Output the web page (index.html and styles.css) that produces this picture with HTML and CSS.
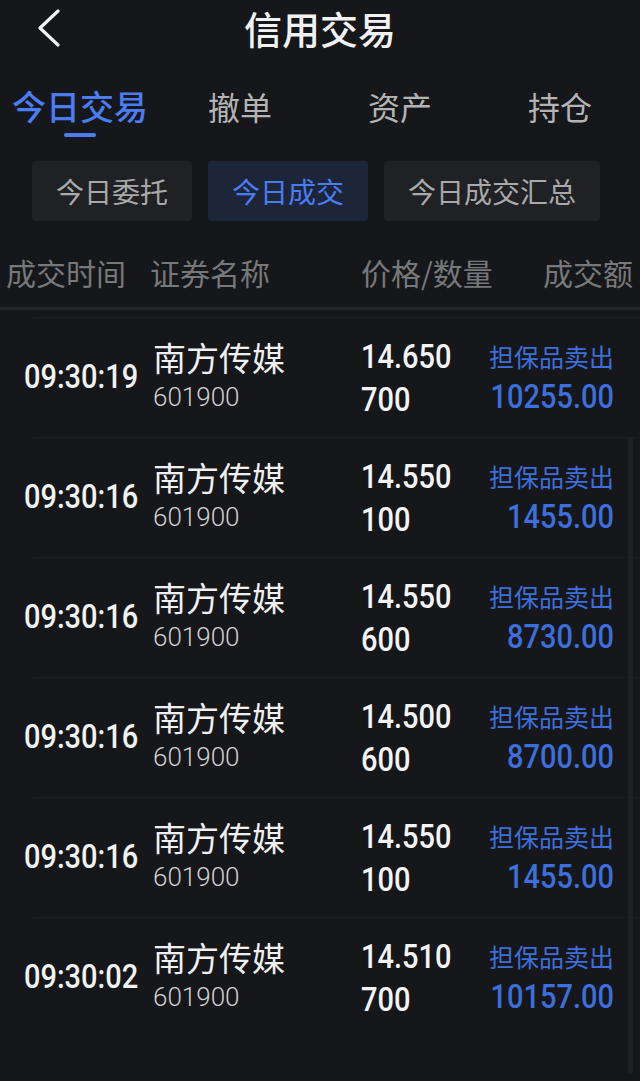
FILE: index.html
```html
<!DOCTYPE html>
<html lang="zh-CN">
<head>
    <meta charset="UTF-8">
    <meta name="viewport" content="width=device-width, initial-scale=1.0">
    <title>信用交易</title>
    <link rel="stylesheet" href="styles.css">
</head>
<body>

<div class="app">
    <!-- top bar -->
    <div class="nav">
        <div class="back">
            <svg width="24" height="38" viewBox="0 0 24 38">
                <polyline points="21,2 3,19 21,36" fill="none" stroke="#f2f2f2" stroke-width="3.2" stroke-linecap="round" stroke-linejoin="round"/>
            </svg>
        </div>
        <div class="title">信用交易</div>
        <div></div>
    </div>

    <!-- main tabs -->
    <div class="tabs">
        <div class="tab active">今日交易<span class="indicator"></span></div>
        <div class="tab">撤单</div>
        <div class="tab">资产</div>
        <div class="tab">持仓</div>
    </div>

    <!-- sub tabs -->
    <div class="sub-tabs">
        <div class="sub-tab">今日委托</div>
        <div class="sub-tab active">今日成交</div>
        <div class="sub-tab">今日成交汇总</div>
    </div>

    <div class="list-head">
        <span>成交时间</span>
        <span>证券名称</span>
        <span>价格/数量</span>
        <span class="right">成交额</span>
    </div>

    <div class="list">
        <div class="scrollbar"></div>

        <div class="row">
            <div class="time"><span class="num">09:30:19</span></div>
            <div class="stock">
                <div class="name">南方传媒</div>
                <div class="code">601900</div>
            </div>
            <div class="price">
                <div><span class="num">14.650</span></div>
                <div><span class="num">700</span></div>
            </div>
            <div class="amount">
                <div class="type">担保品卖出</div>
                <div><span class="num">10255.00</span></div>
            </div>
        </div>

        <div class="row">
            <div class="time"><span class="num">09:30:16</span></div>
            <div class="stock">
                <div class="name">南方传媒</div>
                <div class="code">601900</div>
            </div>
            <div class="price">
                <div><span class="num">14.550</span></div>
                <div><span class="num">100</span></div>
            </div>
            <div class="amount">
                <div class="type">担保品卖出</div>
                <div><span class="num">1455.00</span></div>
            </div>
        </div>

        <div class="row">
            <div class="time"><span class="num">09:30:16</span></div>
            <div class="stock">
                <div class="name">南方传媒</div>
                <div class="code">601900</div>
            </div>
            <div class="price">
                <div><span class="num">14.550</span></div>
                <div><span class="num">600</span></div>
            </div>
            <div class="amount">
                <div class="type">担保品卖出</div>
                <div><span class="num">8730.00</span></div>
            </div>
        </div>

        <div class="row">
            <div class="time"><span class="num">09:30:16</span></div>
            <div class="stock">
                <div class="name">南方传媒</div>
                <div class="code">601900</div>
            </div>
            <div class="price">
                <div><span class="num">14.500</span></div>
                <div><span class="num">600</span></div>
            </div>
            <div class="amount">
                <div class="type">担保品卖出</div>
                <div><span class="num">8700.00</span></div>
            </div>
        </div>

        <div class="row">
            <div class="time"><span class="num">09:30:16</span></div>
            <div class="stock">
                <div class="name">南方传媒</div>
                <div class="code">601900</div>
            </div>
            <div class="price">
                <div><span class="num">14.550</span></div>
                <div><span class="num">100</span></div>
            </div>
            <div class="amount">
                <div class="type">担保品卖出</div>
                <div><span class="num">1455.00</span></div>
            </div>
        </div>

        <div class="row">
            <div class="time"><span class="num">09:30:02</span></div>
            <div class="stock">
                <div class="name">南方传媒</div>
                <div class="code">601900</div>
            </div>
            <div class="price">
                <div><span class="num">14.510</span></div>
                <div><span class="num">700</span></div>
            </div>
            <div class="amount">
                <div class="type">担保品卖出</div>
                <div><span class="num">10157.00</span></div>
            </div>
        </div>
    </div>
</div>

</body>
</html>
```

FILE: styles.css
```css
body {
    margin: 0;
    padding: 0;
    background-color: #16171a;
    font-family: "Noto Sans CJK SC", "Noto Sans", sans-serif;
    color: #eeeeee;
}

.app {
    width: 640px;
    height: 1081px;
    overflow: hidden;
}

/* top bar */
.nav {
    display: grid;
    grid-template-columns: 96px 1fr 96px;
    align-items: center;
    height: 56px;
}

.back {
    display: flex;
    align-items: center;
    padding-left: 37px;
    height: 56px;
}

.title {
    text-align: center;
    font-size: 38px;
    font-weight: 500;
    color: #f2f2f2;
    line-height: 56px;
}

/* main tabs */
.tabs {
    display: grid;
    grid-template-columns: repeat(4, 160px);
    padding-top: 30px;
}

.tab {
    display: flex;
    flex-direction: column;
    align-items: center;
    font-size: 32px;
    line-height: 40px;
    color: #b4b4b4;
}

.tab.active {
    color: #4a7cf4;
    font-size: 34px;
    font-weight: 500;
}

.indicator {
    display: block;
    width: 32px;
    height: 4px;
    margin-top: 7px;
    border-radius: 2px;
    background-color: #4a7cf4;
}

/* sub tabs */
.sub-tabs {
    display: flex;
    gap: 16px;
    padding-left: 32px;
    margin-top: 24px;
}

.sub-tab {
    height: 60px;
    padding: 0 24px;
    border-radius: 4px;
    background-color: #202124;
    color: #a9a9a9;
    font-size: 28px;
    line-height: 60px;
}

.sub-tab.active {
    background-color: #1d2538;
    color: #4a7cf4;
}

/* list header */
.list-head {
    display: grid;
    grid-template-columns: 144px 211px 1fr auto;
    height: 70px;
    align-items: center;
    padding: 0 7px 0 6px;
    margin-top: 16px;
    border-bottom: 3px solid #232427;
    font-size: 30px;
    color: #777879;
}

/* list */
.list {
    position: relative;
    padding-top: 7px;
}

.scrollbar {
    position: absolute;
    top: 127px;
    right: 7px;
    width: 5px;
    height: 636px;
    border-radius: 3px;
    background-color: #202124;
}

.row {
    display: grid;
    grid-template-columns: 153px 208px 1fr auto;
    align-items: center;
    height: 120px;
    padding-right: 26px;
    background: linear-gradient(#1d1e21, #1d1e21) no-repeat 33px 0 / calc(100% - 33px) 1px;
}

.num {
    display: inline-block;
    font-family: Roboto, "Liberation Sans", sans-serif;
    font-weight: 500;
    font-size: 29px;
    transform: scaleY(1.17);
}

.time {
    padding-left: 24px;
    color: #f2f2f2;
    line-height: 40px;
}

.stock, .price, .amount {
    line-height: 40px;
}

.name {
    font-size: 33px;
    color: #f0f0f0;
}

.code {
    font-family: Roboto, "Liberation Sans", sans-serif;
    font-weight: 300;
    font-size: 26px;
    color: #cfcfcf;
}

.price {
    color: #f4f4f4;
}

.price div:first-child {
    padding-top: 4px;
}

.amount {
    text-align: right;
    color: #3d6fdc;
}

.type {
    font-size: 25px;
}
```
